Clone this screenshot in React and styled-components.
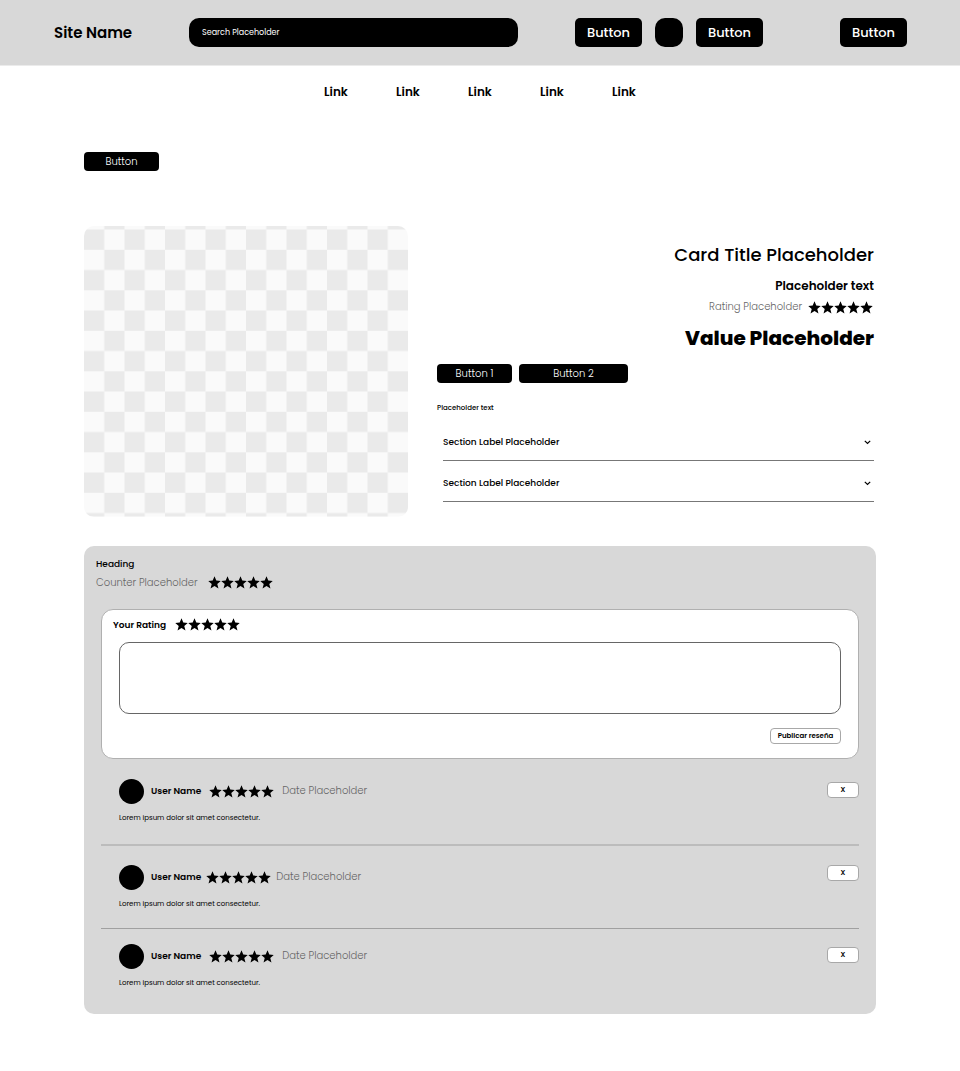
import React from "react";
import styled, { createGlobalStyle } from "styled-components";

const GlobalStyle = createGlobalStyle`
  *, *::before, *::after { box-sizing: border-box; }
  body {
    margin: 0;
    background: #fff;
    color: #000;
    font-family: Poppins, Inter, "Liberation Sans", sans-serif;
  }
  button, input, textarea { font-family: inherit; color: inherit; margin: 0; }
  h1, h2, p { margin: 0; }
`;

const Header = styled.header`
  display: flex;
  align-items: center;
  padding: 18px 53px 18px 54px;
  background: #d8d8d8;
  border-bottom: 1px solid #ebebeb;
`;

const SiteName = styled.a`
  width: 135px;
  flex: none;
  font-size: 15px;
  line-height: 24px;
  font-weight: 600;
  color: #000;
  text-decoration: none;
`;

const Search = styled.input`
  flex: 1;
  min-width: 0;
  height: 29px;
  padding: 0 13px;
  border: 0;
  border-radius: 10px;
  background: #000;
  color: #fff;
  font-size: 8px;
  &::placeholder { color: #fff; opacity: 1; }
`;

const HeaderActions = styled.div`
  display: flex;
  align-items: center;
  gap: 13px;
  margin: 0 77px 0 57px;
`;

const HeaderButton = styled.button`
  width: 67px;
  height: 29px;
  flex: none;
  padding: 0;
  border: 0;
  border-radius: 5px;
  background: #000;
  color: #fff;
  font-size: 13px;
  font-weight: 500;
`;

const IconButton = styled(HeaderButton)`
  width: 28px;
  border-radius: 10px;
`;

const Nav = styled.nav`
  display: flex;
  justify-content: center;
  padding: 16px 0;
`;

const NavLink = styled.a`
  width: 72px;
  text-align: center;
  font-size: 12px;
  line-height: 20px;
  font-weight: 600;
  color: #000;
  text-decoration: none;
`;

const Main = styled.main`
  padding: 34px 84px 57px;
`;

const SmallButton = styled.button`
  display: block;
  width: ${(p) => (p.$wide ? 109 : 75)}px;
  height: 19px;
  padding: 0;
  border: 0;
  border-radius: 4px;
  background: #000;
  color: #fff;
  font-size: 10px;
  font-weight: 300;
`;

const Product = styled.section`
  display: grid;
  grid-template-columns: minmax(0, 324fr) minmax(0, 437fr);
  gap: 29px;
  margin: 55px 2px 29px 0;
`;

const Picture = styled.svg`
  display: block;
  width: 100%;
  border-radius: 10px;
`;

const Details = styled.div`
  display: flex;
  flex-direction: column;
  padding-top: 15px;
`;

const Title = styled.h1`
  text-align: right;
  font-size: 18px;
  line-height: 28px;
  font-weight: 500;
`;

const Subtitle = styled.p`
  margin-top: 7px;
  text-align: right;
  font-size: 12px;
  line-height: 20px;
  font-weight: 600;
`;

const RatingLine = styled.div`
  display: flex;
  justify-content: flex-end;
  align-items: center;
  gap: 6px;
  height: 16px;
  margin: 3px 1px 0 0;
`;

const Muted = styled.span`
  font-size: 10px;
  line-height: 16px;
  font-weight: 300;
  color: #666;
`;

const Value = styled.p`
  margin-top: 7px;
  text-align: right;
  font-size: 20px;
  line-height: 32px;
  font-weight: 800;
`;

const ButtonRow = styled.div`
  display: flex;
  gap: 7px;
  margin-top: 10px;
`;

const Note = styled.p`
  margin-top: 19px;
  font-size: 7px;
  line-height: 12px;
  font-weight: 500;
`;

const Accordion = styled.div`
  margin: 6px 0 0 6px;
`;

const AccordionItem = styled.button`
  display: flex;
  align-items: center;
  justify-content: space-between;
  width: 100%;
  height: 41px;
  padding: 4px 3px 0 0;
  border: 0;
  border-bottom: 1px solid #777;
  background: none;
  font-size: 9px;
  font-weight: 500;
`;

const Reviews = styled.section`
  padding: 10px 17px 19px;
  border-radius: 10px;
  background: #d8d8d8;
`;

const Heading = styled.h2`
  font-size: 9px;
  line-height: 16px;
  font-weight: 500;
`;

const ReviewsHead = styled.div`
  margin-left: -5px;
`;

const Counter = styled.div`
  display: flex;
  align-items: center;
  gap: 10px;
  margin-top: 3px;
`;

const RatingForm = styled.form`
  margin-top: 18px;
  padding: 7px 17px 14px;
  border: 1px solid #b0b0b0;
  border-radius: 12px;
  background: #fff;
`;

const RatingField = styled.fieldset`
  display: flex;
  align-items: center;
  gap: 9px;
  margin: 0 0 0 -6px;
  padding: 0;
  border: 0;
`;

const FieldName = styled.span`
  font-size: 9px;
  line-height: 16px;
  font-weight: 600;
`;

const StarRow = styled.span`
  display: flex;
`;

const StarIcon = styled.svg`
  display: block;
  width: 13px;
  height: 13px;
`;

const StarLabel = styled.label`
  position: relative;
  cursor: pointer;
`;

const StarInput = styled.input`
  position: absolute;
  inset: 0;
  opacity: 0;
`;

const Comment = styled.textarea`
  display: block;
  width: 100%;
  height: 72px;
  margin-top: 9px;
  padding: 8px 12px;
  border: 1px solid #666;
  border-radius: 10px;
  background: #fff;
  font-size: 9px;
  resize: none;
`;

const OutlineButton = styled.button`
  display: block;
  flex: none;
  width: ${(p) => (p.$wide ? 71 : 32)}px;
  height: 16px;
  padding: 0;
  border: 1px solid #a8a8a8;
  border-radius: 4px;
  background: #fff;
  font-size: 7px;
  line-height: 14px;
  font-weight: 600;
`;

const FormFoot = styled.div`
  display: flex;
  justify-content: flex-end;
  margin-top: 14px;
`;

const Review = styled.article`
  display: flex;
  justify-content: space-between;
  align-items: flex-start;
  padding: ${(p) => p.$top}px 0 ${(p) => p.$bottom}px 18px;
  border-bottom: ${(p) => p.$rule || "0"};
`;

const Author = styled.div`
  display: flex;
  align-items: center;
  gap: ${(p) => p.$gap}px;
`;

const Person = styled.div`
  display: flex;
  align-items: center;
  gap: 7px;
`;

const Avatar = styled.span`
  width: 25px;
  height: 25px;
  border-radius: 50%;
  background: #000;
`;

const ReviewText = styled.p`
  margin-top: 8px;
  font-size: 7px;
  line-height: 12px;
  font-weight: 400;
`;

const RemoveSlot = styled.div`
  padding-top: ${(p) => p.$top}px;
`;

function Star() {
  return (
    <StarIcon viewBox="0 0 24 24" aria-hidden="true">
      <path d="M12 .5l3.300 8 8.200.6-6.400 5.500 2.200 8.600L12 18.600 4.700 23.200l2.200-8.600L.5 9.100l8.200-.6z" />
    </StarIcon>
  );
}

function Stars() {
  return (
    <StarRow role="img" aria-label="5 / 5">
      {[1, 2, 3, 4, 5].map((n) => (
        <Star key={n} />
      ))}
    </StarRow>
  );
}

function Chevron() {
  return (
    <svg width="7" height="5" viewBox="0 0 7 5" fill="none" stroke="#000" strokeWidth="1.2" aria-hidden="true">
      <path d="M.8.8l2.700 2.700L6.200.8" />
    </svg>
  );
}

const reviews = [
  { top: 20, bottom: 20, rule: "2px solid #bcbcbc", gap: 8, slot: 3 },
  { top: 19, bottom: 18, rule: "1px solid #a0a0a0", gap: 5, slot: 0 },
  { top: 15, bottom: 6, rule: "", gap: 8, slot: 3 },
];

export default function App() {
  return (
    <>
      <GlobalStyle />
      <Header>
        <SiteName href="#">Site Name</SiteName>
        <Search type="search" placeholder="Search Placeholder" aria-label="Search Placeholder" />
        <HeaderActions>
          <HeaderButton type="button">Button</HeaderButton>
          <IconButton type="button" aria-label="Account" />
          <HeaderButton type="button">Button</HeaderButton>
        </HeaderActions>
        <HeaderButton type="button">Button</HeaderButton>
      </Header>
      <Nav>
        {[1, 2, 3, 4, 5].map((n) => (
          <NavLink key={n} href="#">Link</NavLink>
        ))}
      </Nav>
      <Main>
        <SmallButton type="button">Button</SmallButton>
        <Product>
          <Picture viewBox="0 0 320 287" role="img" aria-label="Product">
            <defs>
              <pattern id="checker" y="-16.5" width="40" height="40" patternUnits="userSpaceOnUse">
                <rect width="40" height="40" fill="#fafafa" />
                <path d="M20 0h20v20H20zM0 20h20v20H0z" fill="#eaeaea" />
              </pattern>
            </defs>
            <rect width="320" height="287" fill="url(#checker)" />
          </Picture>
          <Details>
            <Title>Card Title Placeholder</Title>
            <Subtitle>Placeholder text</Subtitle>
            <RatingLine>
              <Muted>Rating Placeholder</Muted>
              <Stars />
            </RatingLine>
            <Value>Value Placeholder</Value>
            <ButtonRow>
              <SmallButton type="button">Button 1</SmallButton>
              <SmallButton type="button" $wide>Button 2</SmallButton>
            </ButtonRow>
            <Note>Placeholder text</Note>
            <Accordion>
              {[1, 2].map((n) => (
                <AccordionItem key={n} type="button" aria-expanded="false">
                  Section Label Placeholder
                  <Chevron />
                </AccordionItem>
              ))}
            </Accordion>
          </Details>
        </Product>
        <Reviews>
          <ReviewsHead>
            <Heading>Heading</Heading>
            <Counter>
              <Muted>Counter Placeholder</Muted>
              <Stars />
            </Counter>
          </ReviewsHead>
          <RatingForm>
            <RatingField aria-labelledby="your-rating">
              <FieldName id="your-rating">Your Rating</FieldName>
              <StarRow>
                {[1, 2, 3, 4, 5].map((n) => (
                  <StarLabel key={n}>
                    <StarInput type="radio" name="rating" value={n} aria-label={String(n)} />
                    <Star />
                  </StarLabel>
                ))}
              </StarRow>
            </RatingField>
            <Comment aria-labelledby="your-rating" />
            <FormFoot>
              <OutlineButton type="button" $wide>Publicar reseña</OutlineButton>
            </FormFoot>
          </RatingForm>
          {reviews.map((r, i) => (
            <Review key={i} $top={r.top} $bottom={r.bottom} $rule={r.rule}>
              <div>
                <Author $gap={r.gap}>
                  <Person>
                    <Avatar />
                    <FieldName>User Name</FieldName>
                  </Person>
                  <Stars />
                  <Muted>Date Placeholder</Muted>
                </Author>
                <ReviewText>Lorem ipsum dolor sit amet consectetur.</ReviewText>
              </div>
              <RemoveSlot $top={r.slot}>
                <OutlineButton type="button">X</OutlineButton>
              </RemoveSlot>
            </Review>
          ))}
        </Reviews>
      </Main>
    </>
  );
}
